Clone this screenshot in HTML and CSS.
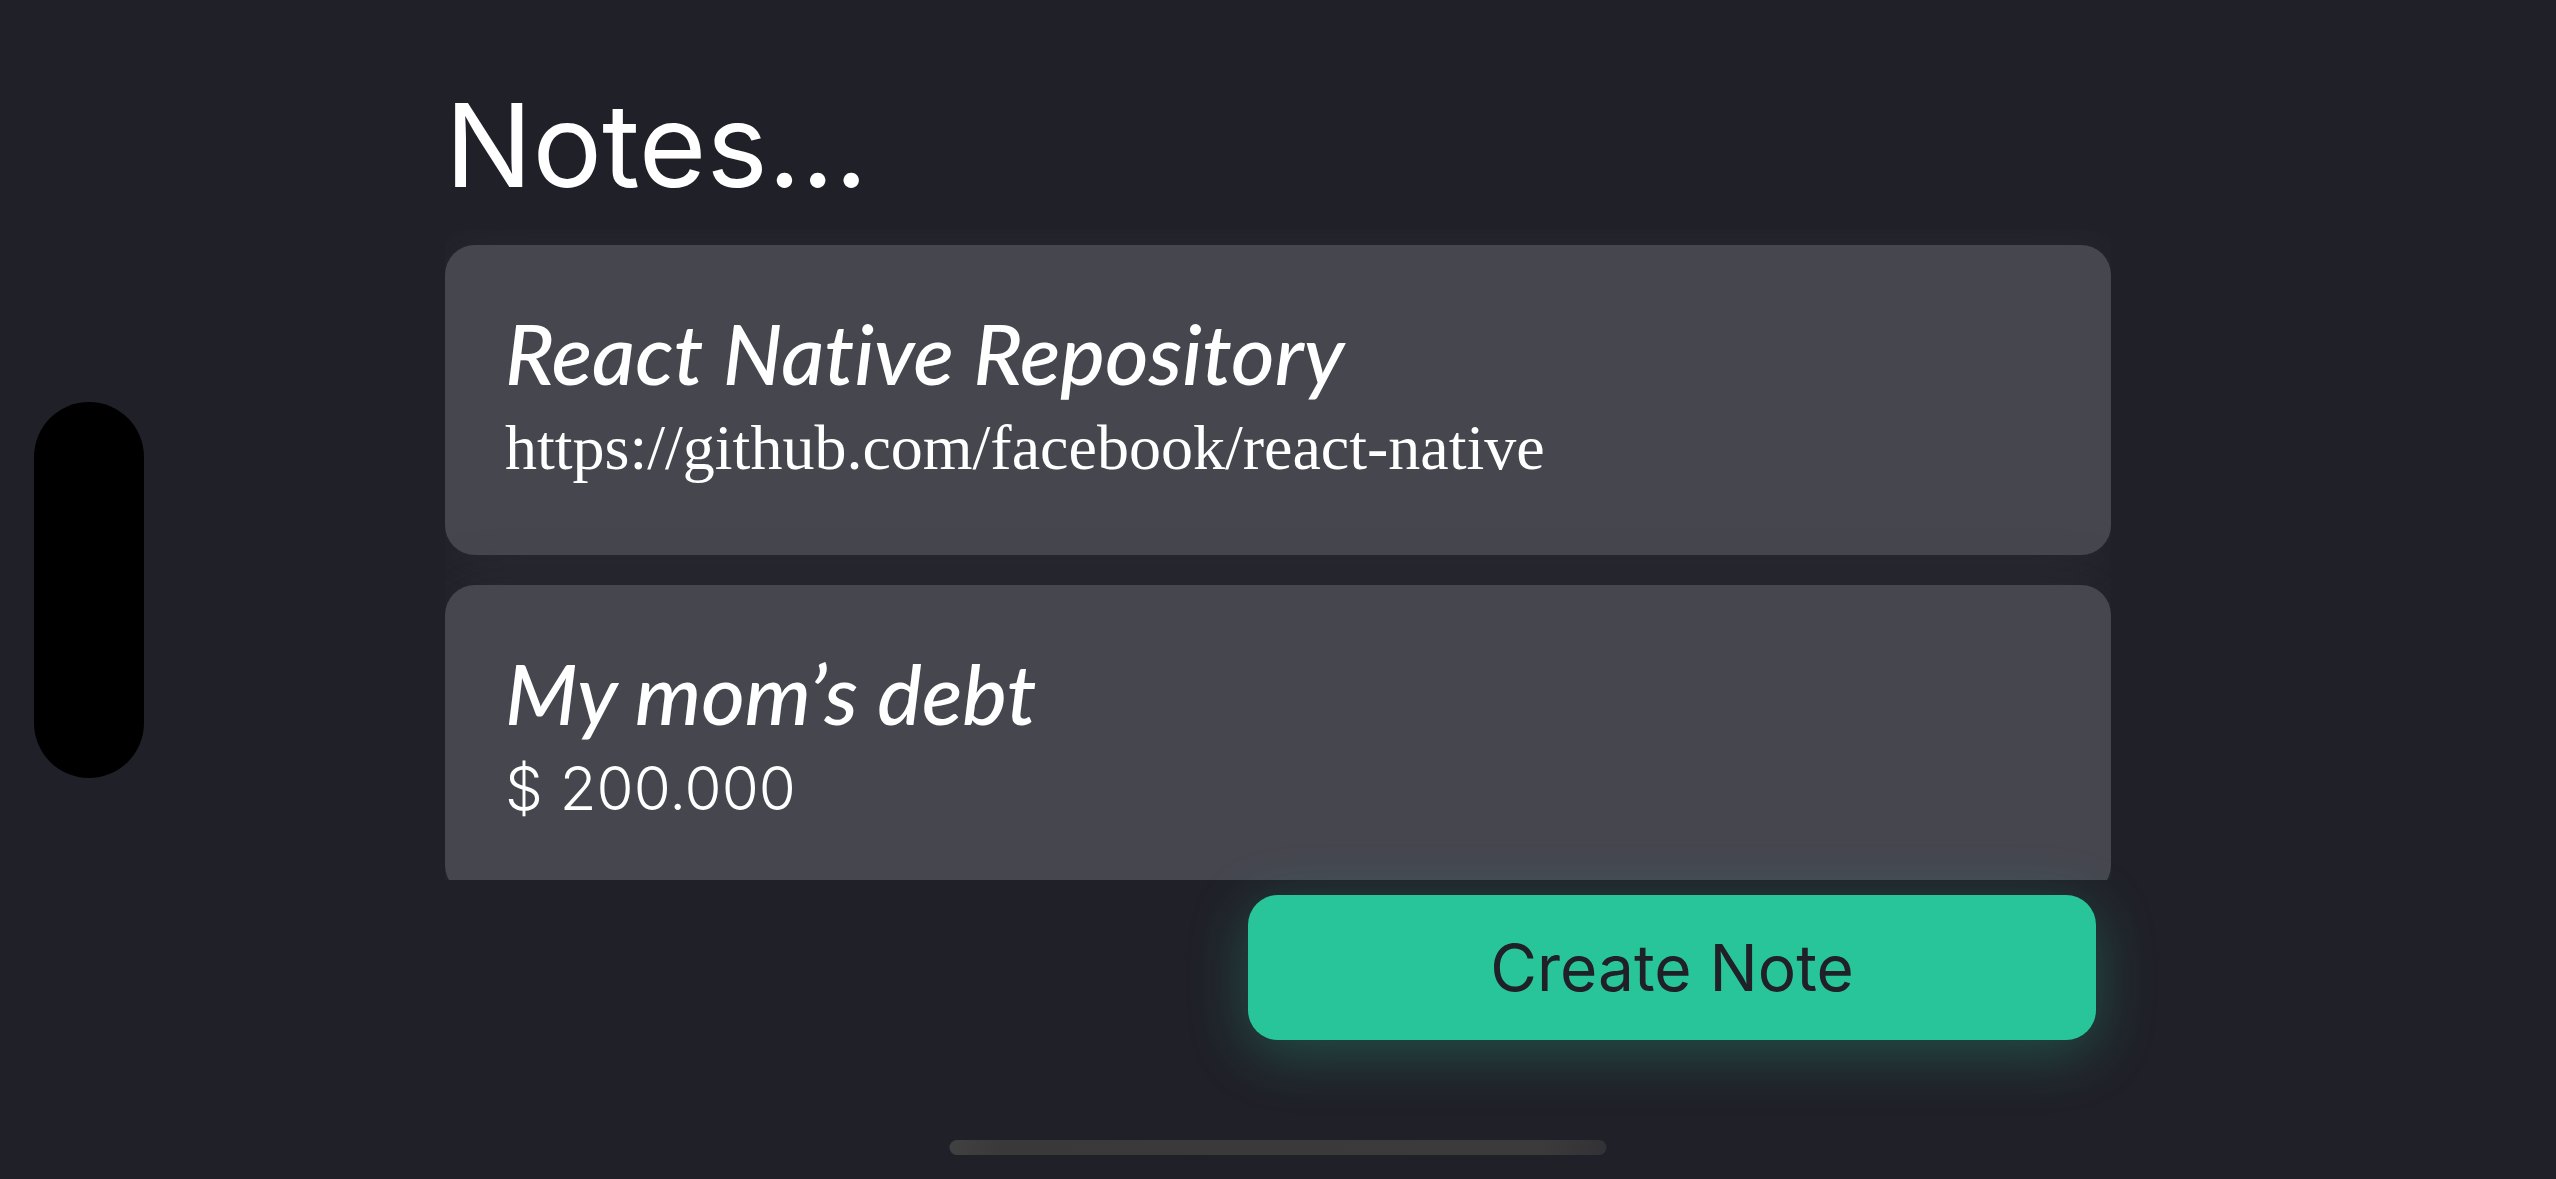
FILE: index.html
```
<!DOCTYPE html>
<html lang="en">
<head>
  <meta charset="utf-8">
  <meta name="viewport" content="width=device-width, initial-scale=1">
  <title>Notes</title>
  <link rel="stylesheet" href="styles.css">
</head>
<body>
  <main class="screen">
    <h1 class="heading">Notes...</h1>
    <section class="notes" aria-label="Notes">
      <article class="note">
        <h2 class="note-title">React Native Repository</h2>
        <p class="note-body">https://github.com/facebook/react-native</p>
      </article>
      <article class="note">
        <h2 class="note-title">My mom’s debt</h2>
        <p class="note-body note-amount">$ 200.000</p>
      </article>
    </section>
    <footer class="actions">
      <button class="create" type="button">Create Note</button>
    </footer>
  </main>
  <div class="island"></div>
  <div class="home-indicator"></div>
</body>
</html>
```
FILE: styles.css
```
* {
  box-sizing: border-box;
}

body {
  margin: 0;
  background: #202028;
  color: #ffffff;
  font-family: Inter, "Liberation Sans", sans-serif;
}

h1,
h2,
p {
  margin: 0;
  font-weight: 400;
}

.screen {
  display: flex;
  flex-direction: column;
  height: 100vh;
  padding: 60px 445px 139px;
}

.heading {
  flex: none;
  height: 170px;
  font-size: 116px;
  line-height: 170px;
}

.notes {
  display: flex;
  flex: 1;
  flex-direction: column;
  gap: 30px;
  min-height: 0;
  padding: 15px 0;
  overflow-y: auto;
  scrollbar-width: none;
}

.note {
  flex: none;
  padding: 60px;
  border-radius: 30px;
  background: #46464f;
  box-shadow: 0 6px 60px rgba(70, 70, 84, 0.3);
}

.note-title {
  font-family: Lato, sans-serif;
  font-size: 84px;
  font-style: italic;
  font-weight: 500;
  font-variant-ligatures: none;
  line-height: 96px;
}

.note-body {
  font-family: "Liberation Serif", serif;
  font-size: 64px;
  line-height: 94px;
}

.note-amount {
  font-family: Inter, sans-serif;
  font-size: 60px;
  font-weight: 300;
}

.actions {
  display: flex;
  flex: none;
  justify-content: flex-end;
  padding: 15px 15px 0;
}

.create {
  position: relative;
  width: 848px;
  max-width: 100%;
  height: 145px;
  border: 0;
  border-radius: 30px;
  background: #29c59a;
  box-shadow: 0 12px 60px rgba(41, 197, 154, 0.3);
  color: #202028;
  font-family: inherit;
  font-size: 64px;
  cursor: pointer;
}

/* Device overlays */
.island {
  position: absolute;
  top: 50%;
  left: 34px;
  width: 110px;
  height: 376px;
  border-radius: 55px;
  background: #000000;
  transform: translateY(-50%);
}

.home-indicator {
  position: absolute;
  bottom: 24px;
  left: 50%;
  width: 657px;
  height: 15px;
  border-radius: 8px;
  background: linear-gradient(90deg, #414142, #39393a 8%, #3b3b3c 90%, #323236);
  transform: translateX(-50%);
}
```
